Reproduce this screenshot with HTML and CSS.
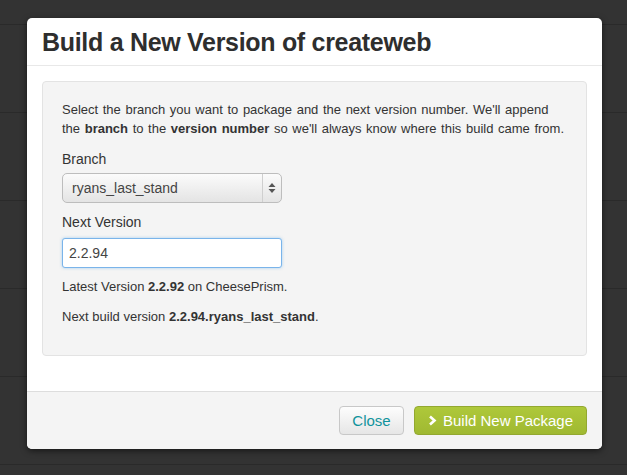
FILE: index.html
```html
<!DOCTYPE html>
<html>
<head>
<meta charset="utf-8">
<link rel="stylesheet" href="styles.css">
</head>
<body>
<div class="modal">
  <div class="modal-header"><h3>Build a New Version of createweb</h3></div>
  <div class="modal-body">
    <div class="well">
      <p class="intro">Select the branch you want to package and the next version number. We'll append<br>the <b>branch</b> to the <b>version number</b> so we'll always know where this build came from.</p>
      <label class="lbl">Branch</label>
      <div class="select">
        <span class="select-val">ryans_last_stand</span>
        <span class="select-arrow">
          <svg width="8" height="12" viewBox="0 0 8 12"><path d="M4 1 L7.5 5 H0.5 Z M4 11 L7.5 7 H0.5 Z" fill="#555"/></svg>
        </span>
      </div>
      <label class="lbl lbl2">Next Version</label>
      <div class="input">2.2.94</div>
      <p class="note">Latest Version <b>2.2.92</b> on CheesePrism.</p>
      <p class="note">Next build version <b>2.2.94.ryans_last_stand</b>.</p>
    </div>
  </div>
  <div class="modal-footer">
    <span class="btn btn-close">Close</span>
    <span class="btn btn-build"><svg width="9" height="11" viewBox="0 0 9 11"><path d="M2 1.5 L6.5 5.5 L2 9.5" stroke="#fff" stroke-width="2.6" fill="none" stroke-linejoin="miter"/></svg>Build New Package</span>
  </div>
</div>
</body>
</html>
```
FILE: styles.css
```css
html, body {
  margin: 0;
  padding: 0;
}
body {
  width: 627px;
  height: 475px;
  overflow: hidden;
  background-color: #333;
  background-image: repeating-linear-gradient(to bottom, transparent 0, transparent 24px, #2a2a2a 24px, #2a2a2a 25px, transparent 25px, transparent 88px);
  font-family: "Liberation Sans", Arial, sans-serif;
  color: #333;
  padding-top: 18px;
  box-sizing: border-box;
}
.modal {
  margin-left: 27px;
  width: 575px;
  background: #fff;
  border-radius: 5px;
  box-shadow: 0 2px 6px rgba(0,0,0,0.55);
}
.modal-header {
  height: 47px;
  border-bottom: 1px solid #e8e8e8;
  padding: 0 15px;
  display: flex;
  align-items: center;
}
.modal-header h3 {
  margin: 0;
  font-size: 25px;
  font-weight: bold;
  color: #2e2e2e;
  letter-spacing: -0.3px;
  padding-top: 1px;
}
.modal-body {
  padding: 15px 15px 35px;
}
.well {
  background: #f4f4f4;
  border: 1px solid #e3e3e3;
  border-radius: 4px;
  padding: 18px 19px 29px;
  font-size: 13px;
  color: #333;
}
.intro {
  margin: 0 0 12px;
  line-height: 19px;
  font-size: 13px;
  word-spacing: 1px;
}
.lbl {
  display: block;
  font-size: 14px;
  line-height: 18px;
  margin-bottom: 5px;
}
.lbl2 {
  margin-top: 10px;
  margin-bottom: 7px;
}
.select {
  width: 220px;
  height: 30px;
  box-sizing: border-box;
  border: 1px solid #bdbdbd;
  border-radius: 5px;
  background: linear-gradient(#fbfbfb, #e4e4e4);
  display: flex;
  align-items: center;
  font-size: 14px;
  color: #444;
}
.select-val {
  flex: 1;
  padding-left: 9px;
}
.select-arrow {
  width: 18px;
  height: 28px;
  border-left: 1px solid #cfcfcf;
  display: flex;
  align-items: center;
  justify-content: center;
}
.input {
  width: 220px;
  height: 30px;
  box-sizing: border-box;
  border: 1px solid #7ab4ea;
  border-radius: 3px;
  background: #fff;
  box-shadow: 0 0 3px rgba(82,168,236,0.5);
  font-size: 14px;
  color: #444;
  padding-left: 6px;
  display: flex;
  align-items: center;
  margin-bottom: 10px;
}
.note {
  margin: 0 0 12px;
  line-height: 18px;
  font-size: 13px;
}
.note:last-child {
  margin-bottom: 0;
}
.modal-footer {
  height: 58px;
  background: #f4f4f4;
  border-top: 1px solid #ddd;
  border-radius: 0 0 5px 5px;
  display: flex;
  justify-content: flex-end;
  align-items: flex-start;
  padding: 14px 15px 0 0;
  box-sizing: border-box;
  gap: 10px;
}
.btn {
  height: 29px;
  box-sizing: border-box;
  border-radius: 4px;
  font-size: 15px;
  display: flex;
  align-items: center;
  justify-content: center;
}
.btn-close {
  width: 65px;
  border: 1px solid #c8c8c8;
  background: linear-gradient(#fdfdfd, #e6e6e6);
  color: #10939c;
}
.btn-build {
  width: 173px;
  border: 1px solid #93a830;
  background: linear-gradient(#aec83a, #a0b932);
  color: #fff;
  gap: 6px;
}
```
